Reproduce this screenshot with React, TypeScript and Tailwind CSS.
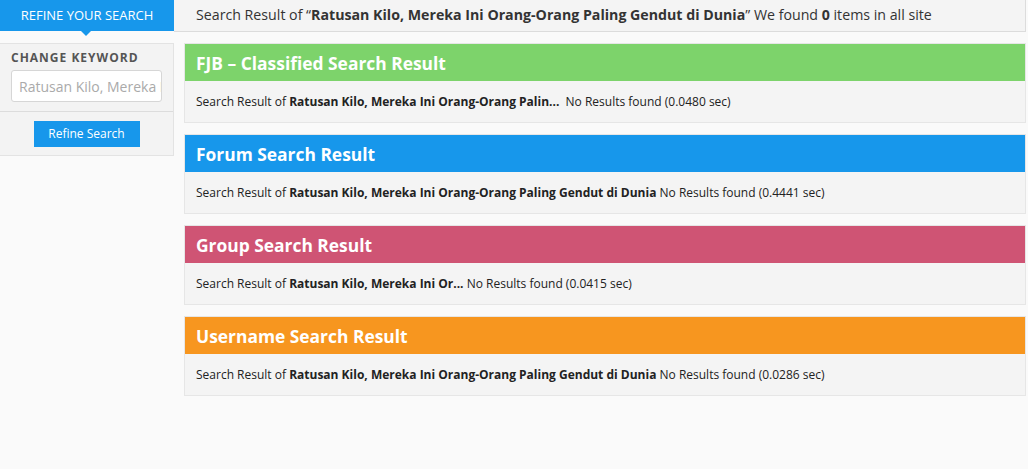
import React from "react";

const font = { fontFamily: '"Open Sans", "Noto Sans", sans-serif' };

function Panel({ title, color, keyword, time }: { title: string; color: string; keyword: string; time: string }) {
  return (
    <div className="border border-[#e6e6e6] bg-[#f4f4f4]">
      <div className={`h-[37px] ${color} flex items-center pl-[11px] text-[17.4px] leading-[24px] font-bold text-white`}>{title}</div>
      <div className="h-[41px] flex items-center pl-[11px] text-[12px] leading-[16px] text-[#222]">
        <span>
          Search Result of <b>{keyword}</b> No Results found ({time} sec)
        </span>
      </div>
    </div>
  );
}

export default function App() {
  return (
    <div className="w-[1028px] h-[469px] bg-[#fafafa] overflow-hidden" style={font}>
      <div className="flex">
        <div className="w-[174px] flex flex-col">
          <div className="relative h-[31px] bg-[#1797eb] text-white text-[13px] flex items-center justify-center">
            REFINE YOUR SEARCH
            <div className="absolute left-[81px] top-[31px] w-0 h-0 border-l-[5px] border-r-[5px] border-t-[5px] border-l-transparent border-r-transparent border-t-[#1797eb]" />
          </div>
          <div className="mt-[12px] bg-[#f3f3f3] border-r border-b border-t border-[#e3e3e3] h-[113px]">
            <div className="px-[11px] pt-[6px] pb-[9px]">
              <div className="text-[12px] leading-[16px] font-bold tracking-[1px] text-[#555]">CHANGE KEYWORD</div>
              <input
                readOnly
                placeholder="Ratusan Kilo, Mereka Ini Orang-Orang Paling Gendut di Dunia"
                className="mt-[4px] h-[32px] w-[151px] bg-white border border-[#d6d6d6] rounded-[3px] pl-[7px] text-[14px] text-[#aaa] placeholder:text-[#aaa] outline-none"
                style={font}
              />
            </div>
            <div className="border-t border-[#dcdcdc] flex justify-center pt-[9px]">
              <div className="w-[106px] h-[26px] bg-[#1797eb] text-white text-[12px] flex items-center justify-center">Refine Search</div>
            </div>
          </div>
        </div>
        <div className="flex-1 flex flex-col">
          <div className="h-[32px] bg-[#f4f4f4] border-b border-r border-[#dcdcdc] w-[852px] flex items-center pl-[22px] text-[14.2px] leading-[20px] text-[#333]">
            <span className="-mt-[1px]">
              Search Result of “<b>Ratusan Kilo, Mereka Ini Orang-Orang Paling Gendut di Dunia</b>” We found <b>0</b> items in all site
            </span>
          </div>
          <div className="ml-[10px] w-[842px] mt-[11px] flex flex-col gap-[11px]">
            <Panel title="FJB – Classified Search Result" color="bg-[#7dd36b]" keyword={"Ratusan Kilo, Mereka Ini Orang-Orang Palin...\u00a0"} time="0.0480" />
            <Panel title="Forum Search Result" color="bg-[#1797eb]" keyword="Ratusan Kilo, Mereka Ini Orang-Orang Paling Gendut di Dunia" time="0.4441" />
            <Panel title="Group Search Result" color="bg-[#cf5474]" keyword="Ratusan Kilo, Mereka Ini Or..." time="0.0415" />
            <Panel title="Username Search Result" color="bg-[#f7961f]" keyword="Ratusan Kilo, Mereka Ini Orang-Orang Paling Gendut di Dunia" time="0.0286" />
          </div>
        </div>
      </div>
    </div>
  );
}
